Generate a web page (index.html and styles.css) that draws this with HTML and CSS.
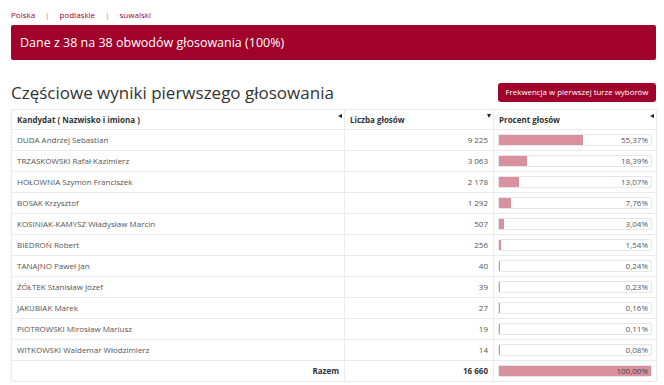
FILE: index.html
```html
<!DOCTYPE html>
<html lang="pl">
<head>
<meta charset="utf-8">
<title>Wyniki</title>
<link rel="stylesheet" href="styles.css">
</head>
<body>
<div class="page">
  <nav class="crumbs">
    <a href="#">Polska</a><span class="sep">|</span><a href="#">podlaskie</a><span class="sep">|</span><a href="#">suwalski</a>
  </nav>
  <div class="banner">Dane z 38 na 38 obwodów głosowania (100%)</div>
  <div class="head-row">
    <h1 class="title">Częściowe wyniki pierwszego głosowania</h1>
    <a class="btn" href="#">Frekwencja w pierwszej turze wyborów</a>
  </div>
  <table class="results">
    <thead>
      <tr>
        <th class="c-name">Kandydat ( Nazwisko i imiona )<span class="sort left"></span></th>
        <th class="c-votes">Liczba głosów<span class="sort down"></span></th>
        <th class="c-pct">Procent głosów<span class="sort left"></span></th>
      </tr>
    </thead>
    <tbody>
      <tr><td>DUDA Andrzej Sebastian</td><td class="num">9 225</td><td class="pct"><div class="bar"><div class="fill" style="width:55.37%"></div><span>55,37%</span></div></td></tr>
      <tr><td>TRZASKOWSKI Rafał Kazimierz</td><td class="num">3 063</td><td class="pct"><div class="bar"><div class="fill" style="width:18.39%"></div><span>18,39%</span></div></td></tr>
      <tr><td>HOŁOWNIA Szymon Franciszek</td><td class="num">2 178</td><td class="pct"><div class="bar"><div class="fill" style="width:13.07%"></div><span>13,07%</span></div></td></tr>
      <tr><td>BOSAK Krzysztof</td><td class="num">1 292</td><td class="pct"><div class="bar"><div class="fill" style="width:7.76%"></div><span>7,76%</span></div></td></tr>
      <tr><td>KOSINIAK-KAMYSZ Władysław Marcin</td><td class="num">507</td><td class="pct"><div class="bar"><div class="fill" style="width:3.04%"></div><span>3,04%</span></div></td></tr>
      <tr><td>BIEDROŃ Robert</td><td class="num">256</td><td class="pct"><div class="bar"><div class="fill" style="width:1.54%"></div><span>1,54%</span></div></td></tr>
      <tr><td>TANAJNO Paweł Jan</td><td class="num">40</td><td class="pct"><div class="bar"><div class="fill" style="width:0.24%"></div><span>0,24%</span></div></td></tr>
      <tr><td>ŻÓŁTEK Stanisław Józef</td><td class="num">39</td><td class="pct"><div class="bar"><div class="fill" style="width:0.23%"></div><span>0,23%</span></div></td></tr>
      <tr><td>JAKUBIAK Marek</td><td class="num">27</td><td class="pct"><div class="bar"><div class="fill" style="width:0.16%"></div><span>0,16%</span></div></td></tr>
      <tr><td>PIOTROWSKI Mirosław Mariusz</td><td class="num">19</td><td class="pct"><div class="bar"><div class="fill" style="width:0.11%"></div><span>0,11%</span></div></td></tr>
      <tr><td>WITKOWSKI Waldemar Włodzimierz</td><td class="num">14</td><td class="pct"><div class="bar"><div class="fill" style="width:0.08%"></div><span>0,08%</span></div></td></tr>
    </tbody>
    <tfoot>
      <tr><td class="total-label">Razem</td><td class="num total">16 660</td><td class="pct"><div class="bar"><div class="fill" style="width:100%"></div><span class="total-pct">100,00%</span></div></td></tr>
    </tfoot>
  </table>
</div>
</body>
</html>
```

FILE: styles.css
```css
* { box-sizing: border-box; }
html, body { margin: 0; padding: 0; background: #fff; }
body {
  font-family: "Open Sans", "Noto Sans", sans-serif;
  color: #555;
}
.page {
  width: 664px;
  padding: 8px 8px 0 11px;
}
.crumbs {
  font-size: 8px;
  line-height: 13px;
  height: 13px;
}
.crumbs a {
  color: #a0002a;
  text-decoration: none;
}
.crumbs .sep {
  color: #888;
  margin: 0 10px;
}
.banner {
  margin-top: 4px;
  height: 35px;
  width: 645px;
  background: #a0022b;
  color: #fff;
  font-size: 12.5px;
  line-height: 35px;
  padding-left: 9px;
  border-radius: 2px;
}
.head-row {
  margin-top: 23px;
  width: 645px;
  display: flex;
  justify-content: space-between;
  align-items: flex-start;
  height: 26px;
}
.title {
  margin: -3px 0 0 0;
  font-size: 17px;
  font-weight: 400;
  color: #333;
  line-height: 26px;
}
.btn {
  background: #a0022b;
  color: #fff;
  font-size: 7.9px;
  line-height: 19px;
  height: 19px;
  width: 158px;
  text-align: center;
  border-radius: 3px;
  text-decoration: none;
}
.results {
  width: 645px;
  border-collapse: collapse;
  font-size: 8px;
  table-layout: fixed;
  box-shadow: 0 1px 2px rgba(0,0,0,0.06);
}
.results th, .results td {
  border: 1px solid #ebebeb;
  height: 21px;
  padding: 0 5px 1px 5px;
  vertical-align: middle;
  white-space: nowrap;
}
.results th {
  position: relative;
  text-align: left;
  font-weight: 700;
  color: #333;
  height: 20px;
}
.c-name { width: 333px; }
.c-votes { width: 149px; }
.c-pct { width: 163px; }
.num { text-align: right; }
.results td.pct { padding: 0 4px 0 4px; }
.bar {
  position: relative;
  height: 12px;
  border: 1px solid #e6e6e6;
  border-radius: 2px;
  background: #fff;
}
.fill {
  height: 100%;
  background: #d9909f;
}
.bar span {
  position: absolute;
  right: 3px;
  top: 0;
  line-height: 10px;
  font-size: 8px;
}
.bar .total-pct { color: #444; }
.total-label { text-align: right; font-weight: 700; color: #333; }
.total { font-weight: 700; color: #333; }
.sort {
  position: absolute;
  right: 2px;
  top: 4px;
  width: 0;
  height: 0;
}
.sort.left {
  border-top: 2.5px solid transparent;
  border-bottom: 2.5px solid transparent;
  border-right: 4px solid #222;
}
.sort.down {
  border-left: 2.5px solid transparent;
  border-right: 2.5px solid transparent;
  border-top: 4px solid #222;
}
```
